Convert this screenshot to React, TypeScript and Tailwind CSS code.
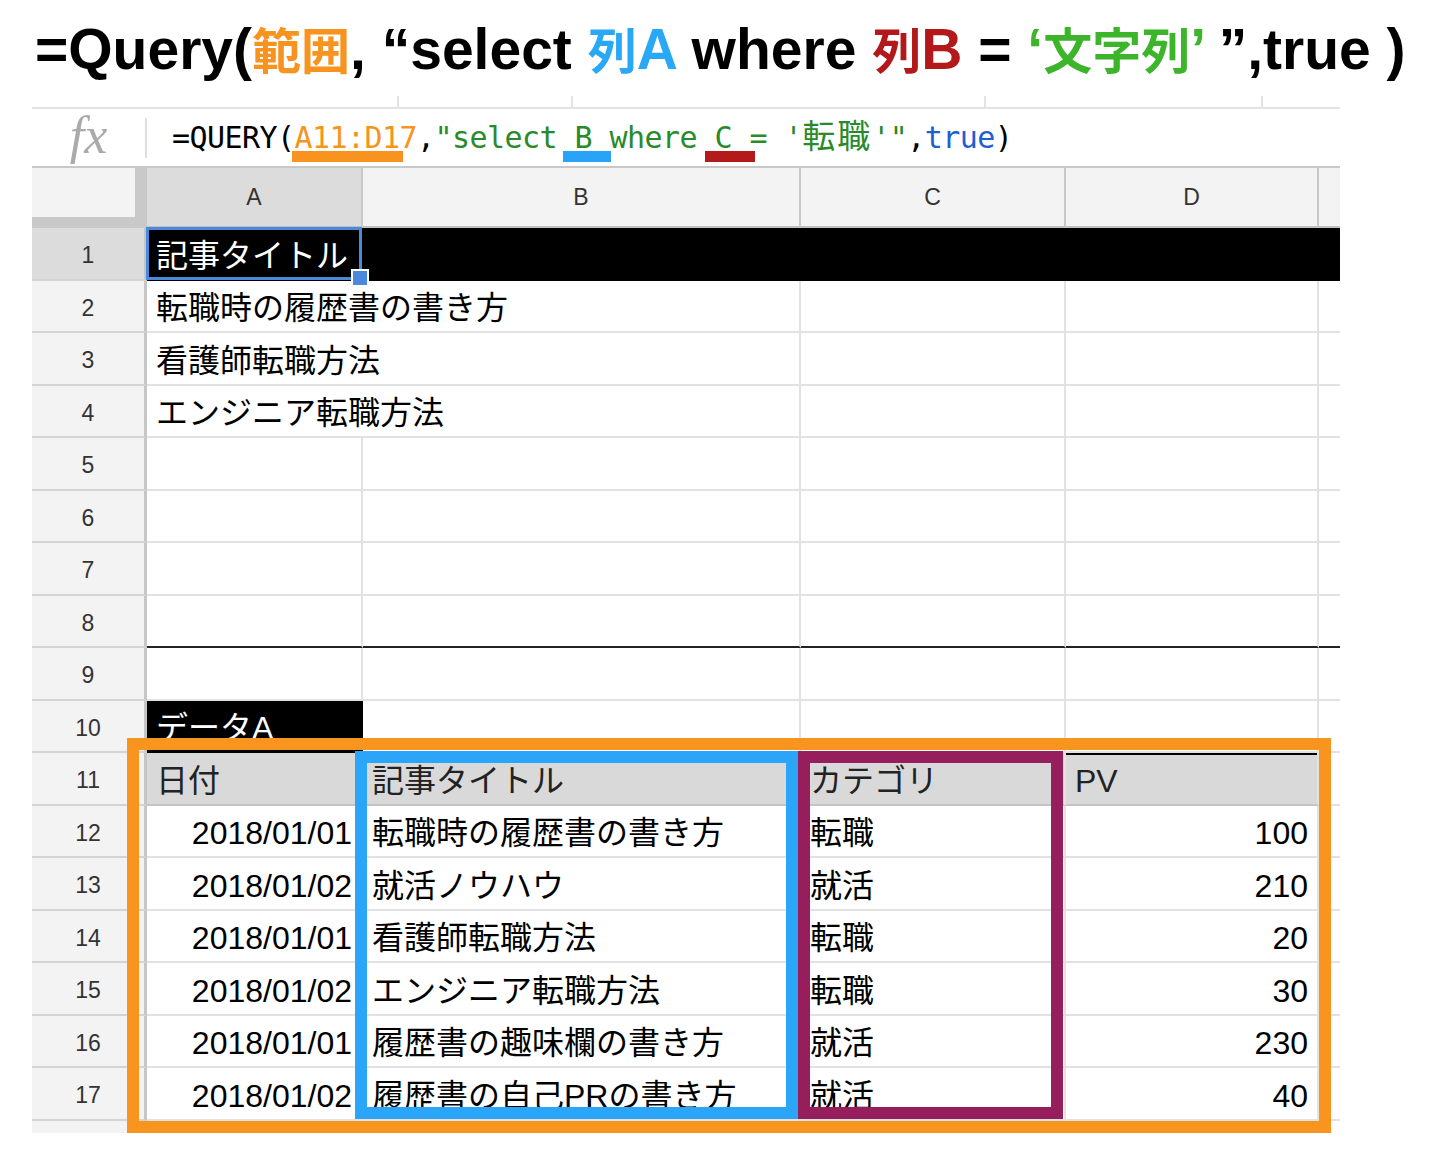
import React from 'react';
import { twMerge } from 'tailwind-merge';

const COLS = 'grid grid-cols-[115px_216px_438px_265px_253px_21px]';

const data = [
  ['2018/01/01', '転職時の履歴書の書き方', '転職', '100'],
  ['2018/01/02', '就活ノウハウ', '就活', '210'],
  ['2018/01/01', '看護師転職方法', '転職', '20'],
  ['2018/01/02', 'エンジニア転職方法', '転職', '30'],
  ['2018/01/01', '履歴書の趣味欄の書き方', '就活', '230'],
  ['2018/01/02', '履歴書の自己PRの書き方', '就活', '40'],
];

function Cell({ className = '', children }: { className?: string; children?: React.ReactNode }) {
  return (
    <div
      className={twMerge(
        'flex items-center whitespace-nowrap border-b-2 border-r-2 border-[#e2e2e2] bg-white pl-[9px] pr-[9px] pt-[4px] text-[32px] leading-none text-black',
        className
      )}
    >
      {children}
    </div>
  );
}

function Row({ n, selected = false, children }: { n: number; selected?: boolean; children: React.ReactNode }) {
  return (
    <div className={`${COLS} ${n % 2 === 1 ? 'h-[53px]' : 'h-[52px]'}`}>
      <div
        className={`flex items-center justify-center border-b-2 border-r-[3px] border-b-[#d4d4d4] border-r-[#c6c6c6] pt-[4px] text-[23px] text-[#333] ${
          selected ? 'bg-[#dcdcdc]' : 'bg-[#f3f3f3]'
        }`}
      >
        {n}
      </div>
      {children}
    </div>
  );
}

export default function App() {
  return (
    <div className="relative h-[1156px] w-[1430px] overflow-hidden bg-white font-['Liberation_Sans','Noto_Sans_CJK_JP',sans-serif]">
      {/* タイトル */}
      <div className="flex h-[96px] items-center pl-[35px] pt-[2px]">
        <h1 className="whitespace-nowrap text-[57px] font-bold leading-none text-black">
          =Query(<span className="text-[49px] text-[#f7931e]">範囲</span>, “select{' '}
          <span className="text-[#29a9f5]">
            <span className="text-[49px]">列</span>A
          </span>{' '}
          where{' '}
          <span className="text-[#b3191b]">
            <span className="text-[49px]">列</span>B
          </span>{' '}
          ={' '}
          <span className="text-[#3cb52a]">
            ‘<span className="text-[49px]">文字列</span>’
          </span>{' '}
          ”,true )
        </h1>
      </div>

      <div className="ml-[32px] w-[1308px]">
        {/* ツールバーの区切り */}
        <div className="flex h-[11px] items-end">
          <div className="ml-[365px] h-[11px] w-[2px] bg-[#e3e3e3]" />
          <div className="ml-[172px] h-[11px] w-[2px] bg-[#e3e3e3]" />
          <div className="ml-[411px] h-[11px] w-[2px] bg-[#e3e3e3]" />
          <div className="ml-[275px] h-[11px] w-[2px] bg-[#e3e3e3]" />
        </div>

        {/* 数式バー */}
        <div className="flex h-[61px] items-center border-t-2 border-b-2 border-t-[#e3e3e3] border-b-[#c8c8c8]">
          <div className="flex w-[113px] justify-center pb-[4px] font-['Liberation_Serif',serif] text-[52px] italic leading-none text-[#aaa]">
            fx
          </div>
          <div className="h-[40px] w-[2px] bg-[#dedede]" />
          <div className="ml-[25px] pb-[3px] whitespace-nowrap font-['DejaVu_Sans_Mono','Noto_Sans_CJK_JP',monospace] text-[30px] leading-none tracking-[-0.56px] text-black">
            =QUERY(
            <span className="relative text-[#f7941d]">
              A11:D17
              <span className="absolute left-[-3px] top-[31px] h-[11px] w-[111px] bg-[#f7931e]" />
            </span>
            ,<span className="text-[#2a8a2a]">"select</span>
            <span className="relative text-[#2a8a2a]">
              {' B '}
              <span className="absolute left-[6px] top-[31px] h-[11px] w-[48px] bg-[#29a3f7]" />
            </span>
            <span className="text-[#2a8a2a]">where</span>
            <span className="relative text-[#2a8a2a]">
              {' C '}
              <span className="absolute left-[8px] top-[31px] h-[11px] w-[50px] bg-[#b41a1a]" />
            </span>
            <span className="text-[#2a8a2a]">
              = '<span className="text-[33px] tracking-[2px]">転職</span>'"
            </span>
            ,<span className="text-[#1f5fd1]">true</span>)
          </div>
        </div>

        {/* 列見出し */}
        <div className={`${COLS} h-[60px] text-[23px] text-[#333]`}>
          <div className="border-b-[11px] border-r-[12px] border-[#c9c9c9] bg-[#f3f3f3]" />
          <div className="flex items-center justify-center border-b-2 border-r-2 border-b-[#c0c0c0] border-r-[#c8c8c8] bg-[#dcdcdc]">A</div>
          <div className="flex items-center justify-center border-b-2 border-r-2 border-b-[#c0c0c0] border-r-[#c8c8c8] bg-[#f3f3f3]">B</div>
          <div className="flex items-center justify-center border-b-2 border-r-2 border-b-[#c0c0c0] border-r-[#c8c8c8] bg-[#f3f3f3]">C</div>
          <div className="flex items-center justify-center border-b-2 border-r-2 border-b-[#c0c0c0] border-r-[#c8c8c8] bg-[#f3f3f3]">D</div>
          <div className="border-b-2 border-b-[#c0c0c0] bg-[#f3f3f3]" />
        </div>

        {/* 1行目 */}
        <Row n={1} selected>
          <Cell className="relative z-20 overflow-visible border-black bg-black text-white">
            記事タイトル
            <div className="absolute inset-[-1px] border-[3px] border-[#4a89dc]" />
            <div className="absolute bottom-[-8px] right-[-8px] h-[18px] w-[18px] border-2 border-white bg-[#4a89dc]" />
          </Cell>
          <Cell className="border-black bg-black" />
          <Cell className="border-black bg-black" />
          <Cell className="border-black bg-black" />
          <Cell className="border-b-black border-r-0 bg-black" />
        </Row>

        {['転職時の履歴書の書き方', '看護師転職方法', 'エンジニア転職方法'].map((t, i) => (
          <Row key={t} n={i + 2}>
            <Cell className="relative z-10 border-r-0">{t}</Cell>
            <Cell />
            <Cell />
            <Cell />
            <Cell className="border-r-0" />
          </Row>
        ))}

        {[5, 6, 7, 8, 9].map((n) => (
          <Row key={n} n={n}>
            <Cell className={n === 8 ? 'border-b-[#222]' : ''} />
            <Cell className={n === 8 ? 'border-b-[#222]' : ''} />
            <Cell className={n === 8 ? 'border-b-[#222]' : ''} />
            <Cell className={n === 8 ? 'border-b-[#222]' : ''} />
            <Cell className={n === 8 ? 'border-r-0 border-b-[#222]' : 'border-r-0'} />
          </Row>
        ))}

        <Row n={10}>
          <Cell className="border-black bg-black text-white">データA</Cell>
          <Cell />
          <Cell />
          <Cell />
          <Cell className="border-r-0" />
        </Row>

        <Row n={11}>
          <Cell className="border-b-[#c4c4c4] bg-[#d9d9d9] text-[#222]">日付</Cell>
          <Cell className="border-b-[#c4c4c4] bg-[#d9d9d9] text-[#222]">記事タイトル</Cell>
          <Cell className="border-b-[#c4c4c4] bg-[#d9d9d9] text-[#222]">カテゴリ</Cell>
          <Cell className="border-b-[#c4c4c4] bg-[#d9d9d9] text-[#222] shadow-[inset_0_2px_0_#000]">PV</Cell>
          <Cell className="border-r-0" />
        </Row>

        {data.map(([date, title, cat, pv], i) => (
          <Row key={i} n={i + 12}>
            <Cell className="justify-end">{date}</Cell>
            <Cell>{title}</Cell>
            <Cell>{cat}</Cell>
            <Cell className="justify-end">{pv}</Cell>
            <Cell className="border-r-0" />
          </Row>
        ))}

        {/* 18行目（見切れ） */}
        <div className={`${COLS} h-[12px]`}>
          <div className="border-r-[3px] border-r-[#c6c6c6] bg-[#f3f3f3]" />
          <div className="border-r-2 border-[#e2e2e2]" />
          <div className="border-r-2 border-[#e2e2e2]" />
          <div className="border-r-2 border-[#e2e2e2]" />
          <div className="border-r-2 border-[#e2e2e2]" />
          <div />
        </div>
      </div>

      {/* 注釈の枠 */}
      <div className="pointer-events-none absolute left-[127px] top-[738px] z-30 h-[395px] w-[1204px] border-[12px] border-[#f8951f]" />
      <div className="pointer-events-none absolute left-[355px] top-[751px] z-30 h-[368px] w-[443px] border-[12px] border-[#2aa5f8]" />
      <div className="pointer-events-none absolute left-[798px] top-[751px] z-30 h-[368px] w-[265px] border-[12px] border-[#961e5c]" />
    </div>
  );
}
